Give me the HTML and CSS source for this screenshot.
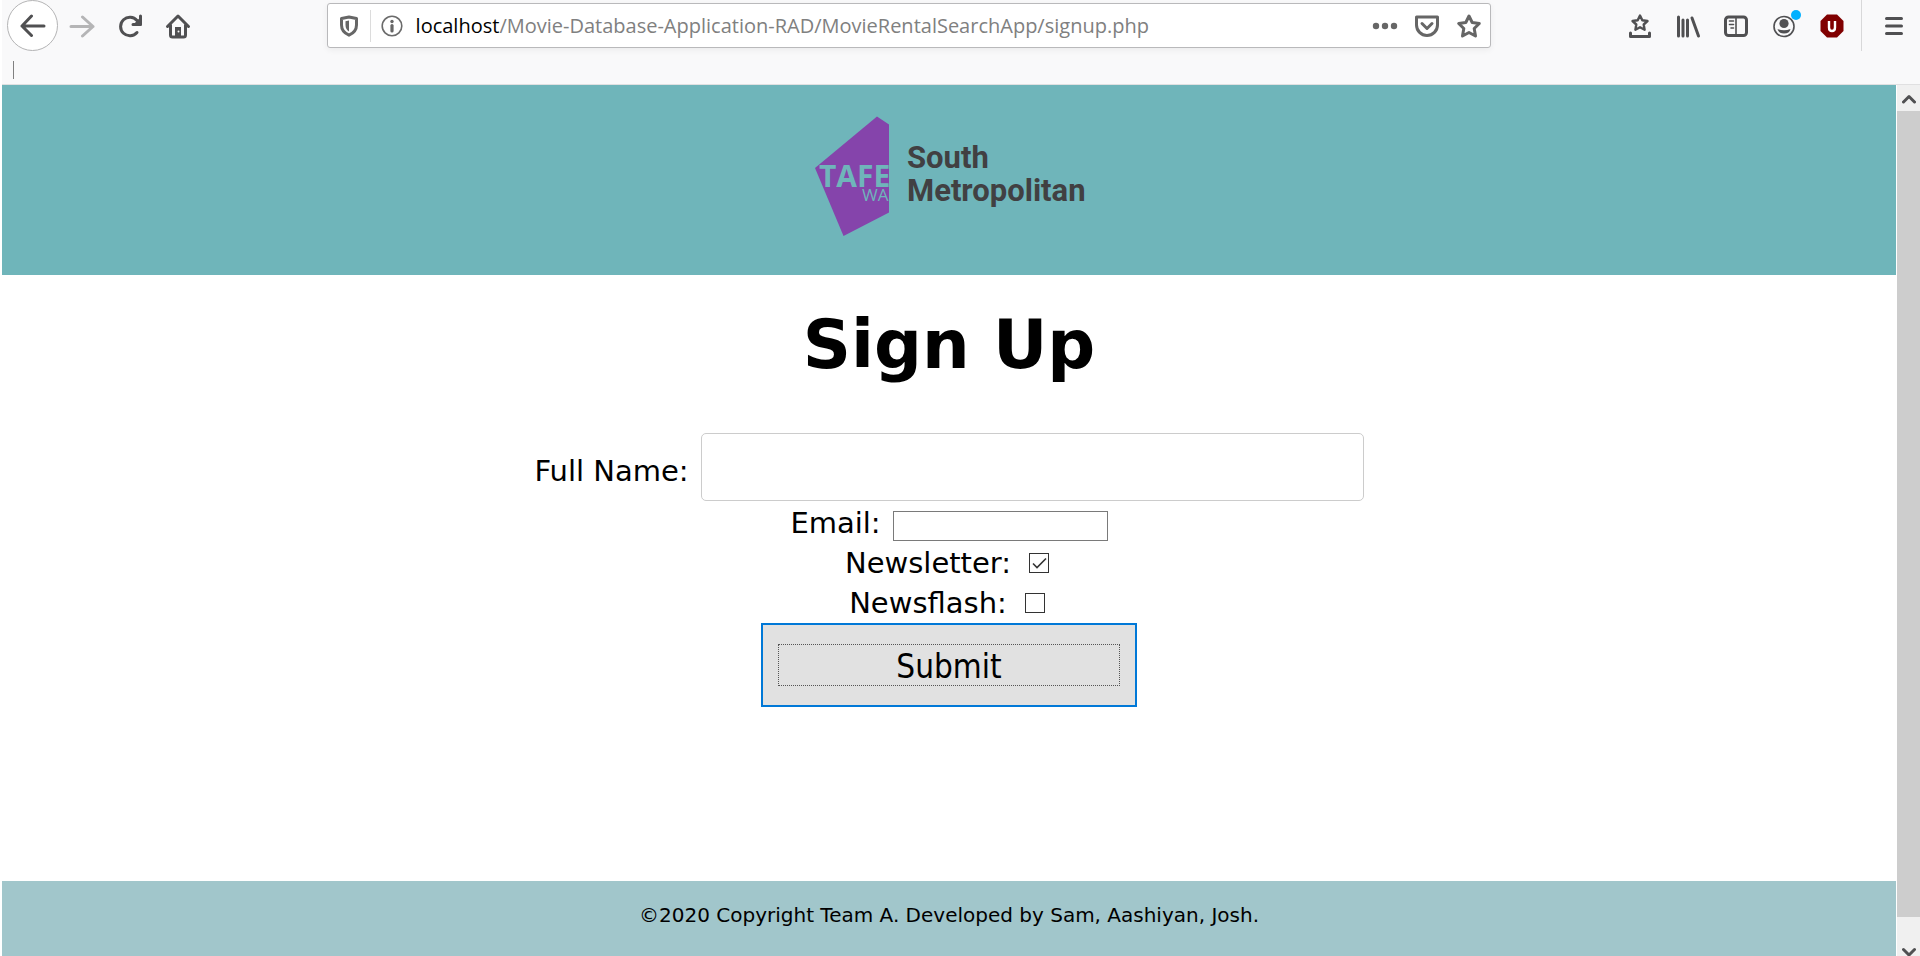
FILE: index.html
```html
<!DOCTYPE html>
<html lang="en">
<head>
<meta charset="utf-8">
<title>Sign Up</title>
<link rel="stylesheet" href="styles.css">
</head>
<body>
<div class="browser">
  <div class="chrome">
    <nav class="toolbar" aria-label="Browser toolbar">
      <button class="tool back" aria-label="Back"><svg width="26" height="26" viewBox="0 0 26 26"><path d="M24 13H2M11.500 3L2 13L11.500 22.500" class="line"/></svg></button>
      <button class="tool forward" aria-label="Forward"><svg width="26" height="26" viewBox="0 0 26 26"><path d="M2 13.500H24M13.500 4L24 13.500L13.500 23" class="line"/></svg></button>
      <button class="tool" aria-label="Reload"><svg width="26" height="26" viewBox="0 0 26 26"><path d="M20 19.500A9.300 9.300 0 1 1 20 7.500" class="line"/><path d="M24.500 3V12.500H15.500z" class="solid"/><path d="M23.500 3V11.500H16" class="line"/></svg></button>
      <button class="tool" aria-label="Home"><svg width="26" height="26" viewBox="0 0 26 26"><path d="M2.500 13.500L13 3L23.500 13.500M5.500 12V22Q5.500 24 7.500 24H18.500Q20.500 24 20.500 22V12" class="line"/><path d="M10 23V14H16V23z" class="solid"/><circle cx="13.500" cy="18.500" r="1" fill="#f9f9fa"/></svg></button>
      <span class="spring"></span>
      <div class="urlbar">
        <svg class="shield" width="20" height="22" viewBox="0 0 20 22"><path d="M10 2L17.500 3.500V10C17.500 15 15 18 10 20.200C5 18 2.500 15 2.500 10V3.500z" fill="none" stroke="#666" stroke-width="3" stroke-linejoin="round"/><path d="M10 5.500V16.500C7.500 15 6.500 13 6.500 10V6.200z" fill="#666"/></svg>
        <span class="url-rule"></span>
        <svg width="22" height="22" viewBox="0 0 22 22"><circle cx="11" cy="11" r="9.800" fill="none" stroke="#6b6b6b" stroke-width="1.600"/><circle cx="11" cy="6.500" r="1.700" fill="#666"/><path d="M11 10.500V16" stroke="#666" stroke-width="3.200" stroke-linecap="round"/></svg>
        <p class="address"><span class="host">localhost</span>/Movie-Database-Application-RAD/MovieRentalSearchApp/signup.php</p>
        <button class="url-action" aria-label="Page actions"><svg width="26" height="26" viewBox="0 0 26 26"><g fill="#666"><circle cx="4" cy="13" r="3.200"/><circle cx="13" cy="13" r="3.200"/><circle cx="22" cy="13" r="3.200"/></g></svg></button>
        <button class="url-action" aria-label="Save to Pocket"><svg width="26" height="26" viewBox="0 0 26 26"><path d="M2.500 4H23.500V12A10.500 10.500 0 0 1 2.500 12z" class="line muted"/><path d="M8 10.500L13 15.500L18 10.500" class="line muted"/></svg></button>
        <button class="url-action" aria-label="Bookmark this page"><svg width="26" height="26" viewBox="0 0 26 26"><path d="M13 3L16.200 9.500L23.300 10.500L18.200 15.500L19.500 23L13 19.500L6.500 23L7.800 15.500L2.700 10.500L9.800 9.500z" class="line muted"/></svg></button>
      </div>
      <span class="spring"></span>
      <button class="tool" aria-label="Bookmarks menu"><svg width="26" height="26" viewBox="0 0 26 26"><path d="M13 2.500L15.300 7.300L20.500 8L16.700 11.500L17.600 16.800L13 14.300L8.400 16.800L9.300 11.500L5.500 8L10.700 7.300z" class="line thin"/><path d="M3.500 20V23.500H22.500V20" class="line"/></svg></button>
      <button class="tool" aria-label="Library"><svg width="26" height="26" viewBox="0 0 26 26"><path d="M3.500 4V23M8 7V23M12.500 7V23M17 5L23.500 23" class="line"/></svg></button>
      <button class="tool" aria-label="Sidebars"><svg width="26" height="26" viewBox="0 0 26 26"><rect x="2.500" y="4" width="21" height="18.500" rx="3" class="line"/><path d="M13 4V22" class="line hair"/><path d="M6.500 8H10.500M6.500 11.500H10.500M8 15H10.500" class="line hair"/></svg></button>
      <button class="tool account" aria-label="Account"><svg width="26" height="26" viewBox="0 0 26 26"><circle cx="13" cy="13.500" r="10" class="line hair"/><circle cx="13" cy="10.500" r="4.600" class="solid"/><path d="M6.500 16Q13 18.500 19.500 16Q18.500 20.500 13 20.500Q7.500 20.500 6.500 16z" class="solid"/></svg><span class="badge"></span></button>
      <button class="tool" aria-label="uBlock Origin"><svg width="26" height="26" viewBox="0 0 26 26"><path d="M8 1.500H18L24.500 8V18L18 24.500H8L1.500 18V8z" fill="#800000"/><path d="M10 8V14.500Q10 18 13 18Q16 18 16 14.500V8" fill="none" stroke="#fff" stroke-width="2.400"/></svg></button>
      <span class="menu-rule"></span>
      <button class="tool menu" aria-label="Open menu"><svg width="20" height="22" viewBox="0 0 20 22"><path d="M2.500 3.500H17.500M2.500 11H17.500M2.500 18.500H17.500" class="line"/></svg></button>
    </nav>
    <div class="bookmarks"><span class="bookmark-rule"></span></div>
  </div>

  <div class="viewport">
    <div class="page">
      <header class="banner">
        <svg width="272" height="124" viewBox="813 115 272 124" role="img" aria-label="TAFE WA South Metropolitan">
          <path d="M815 168L877 116.500L889 124.500V212.500L843.500 236z" fill="#8544ab"/>
          <text x="819" y="187" class="logo-tafe">TAFE</text>
          <text x="862" y="201" class="logo-wa">WA</text>
          <text x="907" y="168" class="logo-name">South</text>
          <text x="907" y="201" class="logo-name">Metropolitan</text>
        </svg>
      </header>
      <main class="content">
        <h1 class="title">Sign Up</h1>
        <form class="signup" onsubmit="return false">
          <div class="row"><label for="name">Full Name:</label><input class="name-input" id="name" type="text"></div>
          <div class="row"><label for="email">Email:</label><input class="email-input" id="email" type="text"></div>
          <div class="row"><label for="newsletter">Newsletter:</label><input class="check" id="newsletter" type="checkbox" checked></div>
          <div class="row"><label for="newsflash">Newsflash:</label><input class="check" id="newsflash" type="checkbox"></div>
          <button class="submit" type="submit"><span class="submit-focus">Submit</span></button>
        </form>
      </main>
      <footer class="footer">©2020 Copyright Team A. Developed by Sam, Aashiyan, Josh.</footer>
    </div>
    <div class="scrollbar" aria-hidden="true">
      <span class="scroll-up"><svg width="14" height="12" viewBox="0 0 14 12"><path d="M1.500 10L7 4.500L12.500 10" class="line"/></svg></span>
      <span class="thumb"></span>
      <span class="scroll-down"><svg width="14" height="12" viewBox="0 0 14 12"><path d="M1.500 5.500L7 11L12.500 5.500" class="line"/></svg></span>
    </div>
  </div>
</div>
</body>
</html>
```
FILE: styles.css
```css
* { box-sizing: border-box; }
body { margin: 0; background: #fff; color: #000; font-family: Verdana, "DejaVu Sans", sans-serif; }
button { border: 0; padding: 0; background: none; color: inherit; font: inherit; }
.browser { display: flex; flex-direction: column; min-height: 100vh; padding-left: 2px; }

.line { fill: none; stroke: #505052; stroke-width: 3; stroke-linecap: round; stroke-linejoin: round; }
.solid { fill: #505052; }
.muted { stroke: #666; }
.thin { stroke-width: 2.4; }
.hair { stroke-width: 1.6; }

.chrome { background: #f9f9fa; border-bottom: 1px solid #e0e0e1; }
.toolbar { display: flex; align-items: center; height: 51px; padding-left: 5px; }
.tool { display: flex; flex: none; align-items: center; justify-content: center; width: 48px; height: 48px; }
.back { width: 51px; height: 51px; border: 1px solid #b4b4b5; border-radius: 50%; background: #fff; }
.forward .line { stroke: #b5b5b6; }
.spring { flex: 3; }
.urlbar { display: flex; flex: 28; align-items: center; min-width: 0; height: 45px; border: 1px solid #b9b9bb; border-radius: 3px; background: #fff; box-shadow: 0 2px 6px rgba(0, 0, 0, .06); }
.shield { margin-left: 11px; }
.url-rule { width: 1px; height: 32px; margin: 0 10px 0 11px; background: #dcdcdc; }
.address { flex: 1; min-width: 0; margin: 0 0 0 13px; overflow: hidden; color: #808080; font: 20px/32px "Segoe UI", "Open Sans", sans-serif; white-space: nowrap; }
.host { color: #000; }
.url-action { display: flex; flex: none; align-items: center; justify-content: center; width: 42px; height: 42px; }
.account { position: relative; }
.badge { position: absolute; top: 8px; right: 7px; width: 10px; height: 10px; border-radius: 50%; background: #00b0ff; }
.menu-rule { width: 1px; height: 51px; margin: 0 8px 0 5px; background: #d8d8d9; }
.menu { margin-right: 2px; }
.bookmarks { height: 33px; padding: 10px 11px; }
.bookmark-rule { display: block; width: 1px; height: 18px; background: #808080; }

.viewport { display: flex; flex: 1; }
.page { display: flex; flex: 1; flex-direction: column; }
.banner { display: flex; justify-content: center; height: 190px; padding-top: 30px; background: #6fb5ba; }
.logo-tafe { fill: #6fb5ba; font: 700 30px "Open Sans", sans-serif; }
.logo-wa { fill: #6fb5ba; font: 17px "Open Sans", sans-serif; }
.logo-name { fill: #414042; font: 700 31px Roboto, sans-serif; }

.content { flex: 1; }
.title { margin: 30px 0 48px; font-size: 67px; line-height: 80px; text-align: center; }
.signup { display: flex; flex-direction: column; align-items: center; font-size: 29px; line-height: 40px; }
.row { display: flex; align-items: baseline; justify-content: center; gap: 12px; width: 100%; }
.name-input { width: 35%; height: 68px; margin-bottom: 2px; padding: 0 12px; border: 1px solid #ccc; border-radius: 5px; font: 40px "DejaVu Sans", sans-serif; }
.email-input { width: 215px; height: 30px; border: 1px solid #7a7a7a; font: 20px "DejaVu Sans", sans-serif; }
.check { width: 20px; height: 20px; margin: 0 4px 0 6px; border: 1px solid #333; appearance: none; background: #fff; }
.check:checked { background: #fff url("data:image/svg+xml,%3Csvg xmlns='http://www.w3.org/2000/svg' viewBox='0 0 18 18'%3E%3Cpath d='M3 9.500L7 13.500L16 4.500' fill='none' stroke='%23333' stroke-width='1.600'/%3E%3C/svg%3E") center / 18px 18px no-repeat; }
.submit { width: 376px; padding: 19px 15px; border: 2px solid #0078d7; background: #e1e1e1; font: 33px/36px Tahoma, "DejaVu Sans Condensed", sans-serif; }
.submit-focus { display: block; padding-top: 4px; border: 1px dotted #555; }
.footer { height: 75px; padding-top: 20px; background: #a1c6cb; font-size: 20px; line-height: 28px; text-align: center; }

.scrollbar { display: flex; flex-direction: column; width: 24px; border-left: 1px solid #fff; background: #f0f0f0; }
.scroll-up { display: flex; align-items: center; justify-content: center; height: 26px; }
.thumb { flex: 1; background: #cdcdcd; }
.scroll-down { display: flex; align-items: flex-end; justify-content: center; height: 39px; }
```
